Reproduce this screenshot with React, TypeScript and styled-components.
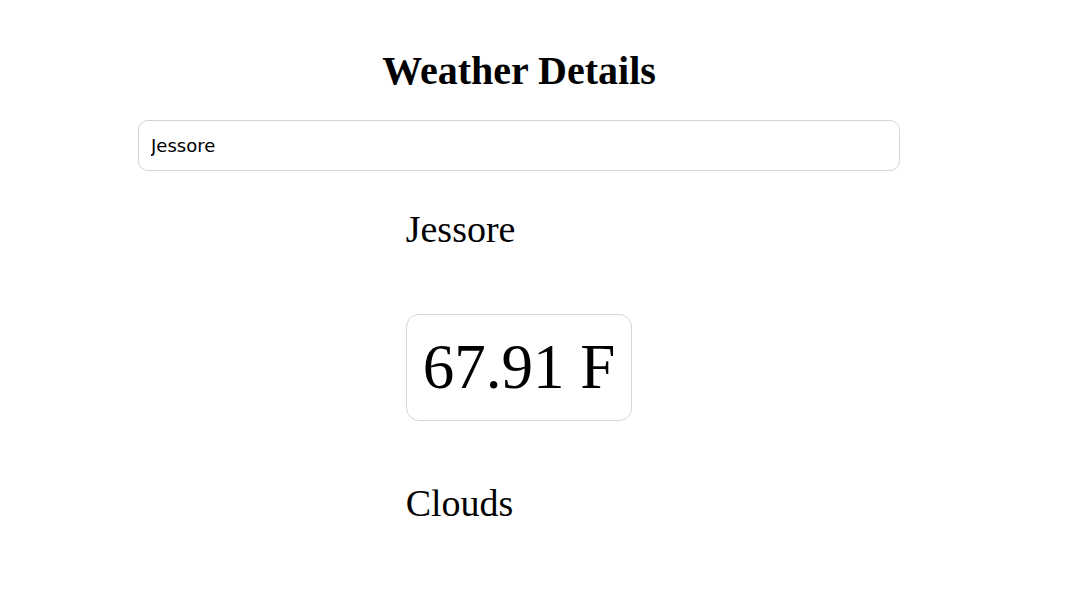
import React from "react";
import styled, { createGlobalStyle } from "styled-components";

const Global = createGlobalStyle`
  html, body { margin: 0; padding: 0; background: #fff; }
  body { font-family: "Liberation Serif", "Times New Roman", serif; color: #000; }
`;

const Page = styled.main`
  width: 762px;
  margin-left: 138px;
  display: flex;
  flex-direction: column;
`;

const Title = styled.h1`
  margin: 48px 0 0;
  font-size: 40px;
  line-height: 46px;
  font-weight: 700;
  text-align: center;
`;

const Search = styled.input`
  margin-top: 26px;
  height: 51px;
  box-sizing: border-box;
  width: 100%;
  border: 1px solid #d4d4d4;
  border-radius: 10px;
  padding: 0 12px;
  font-family: "DejaVu Sans", Verdana, sans-serif;
  font-size: 18px;
  color: #000;
  outline: none;
`;

const ResultRow = styled.section`
  display: flex;
  justify-content: center;
`;

const Result = styled.div`
  display: flex;
  flex-direction: column;
  align-items: flex-start;
`;

const Heading = styled.div<{ $top: number }>`
  margin-top: ${(p) => p.$top}px;
  font-size: 38px;
  line-height: 43px;
`;

const TempCard = styled.div`
  margin-top: 63px;
  height: 107px;
  box-sizing: border-box;
  border: 1px solid #d6d6d6;
  border-radius: 13px;
  padding: 0 16px;
  font-size: 63px;
  line-height: 104px;
  white-space: nowrap;
`;

export default function App() {
  return (
    <>
      <Global />
      <Page>
        <Title>Weather Details</Title>
        <Search defaultValue="Jessore" />
        <ResultRow>
          <Result>
            <Heading $top={37}>Jessore</Heading>
            <TempCard>67.91 F</TempCard>
            <Heading $top={61}>Clouds</Heading>
          </Result>
        </ResultRow>
      </Page>
    </>
  );
}
